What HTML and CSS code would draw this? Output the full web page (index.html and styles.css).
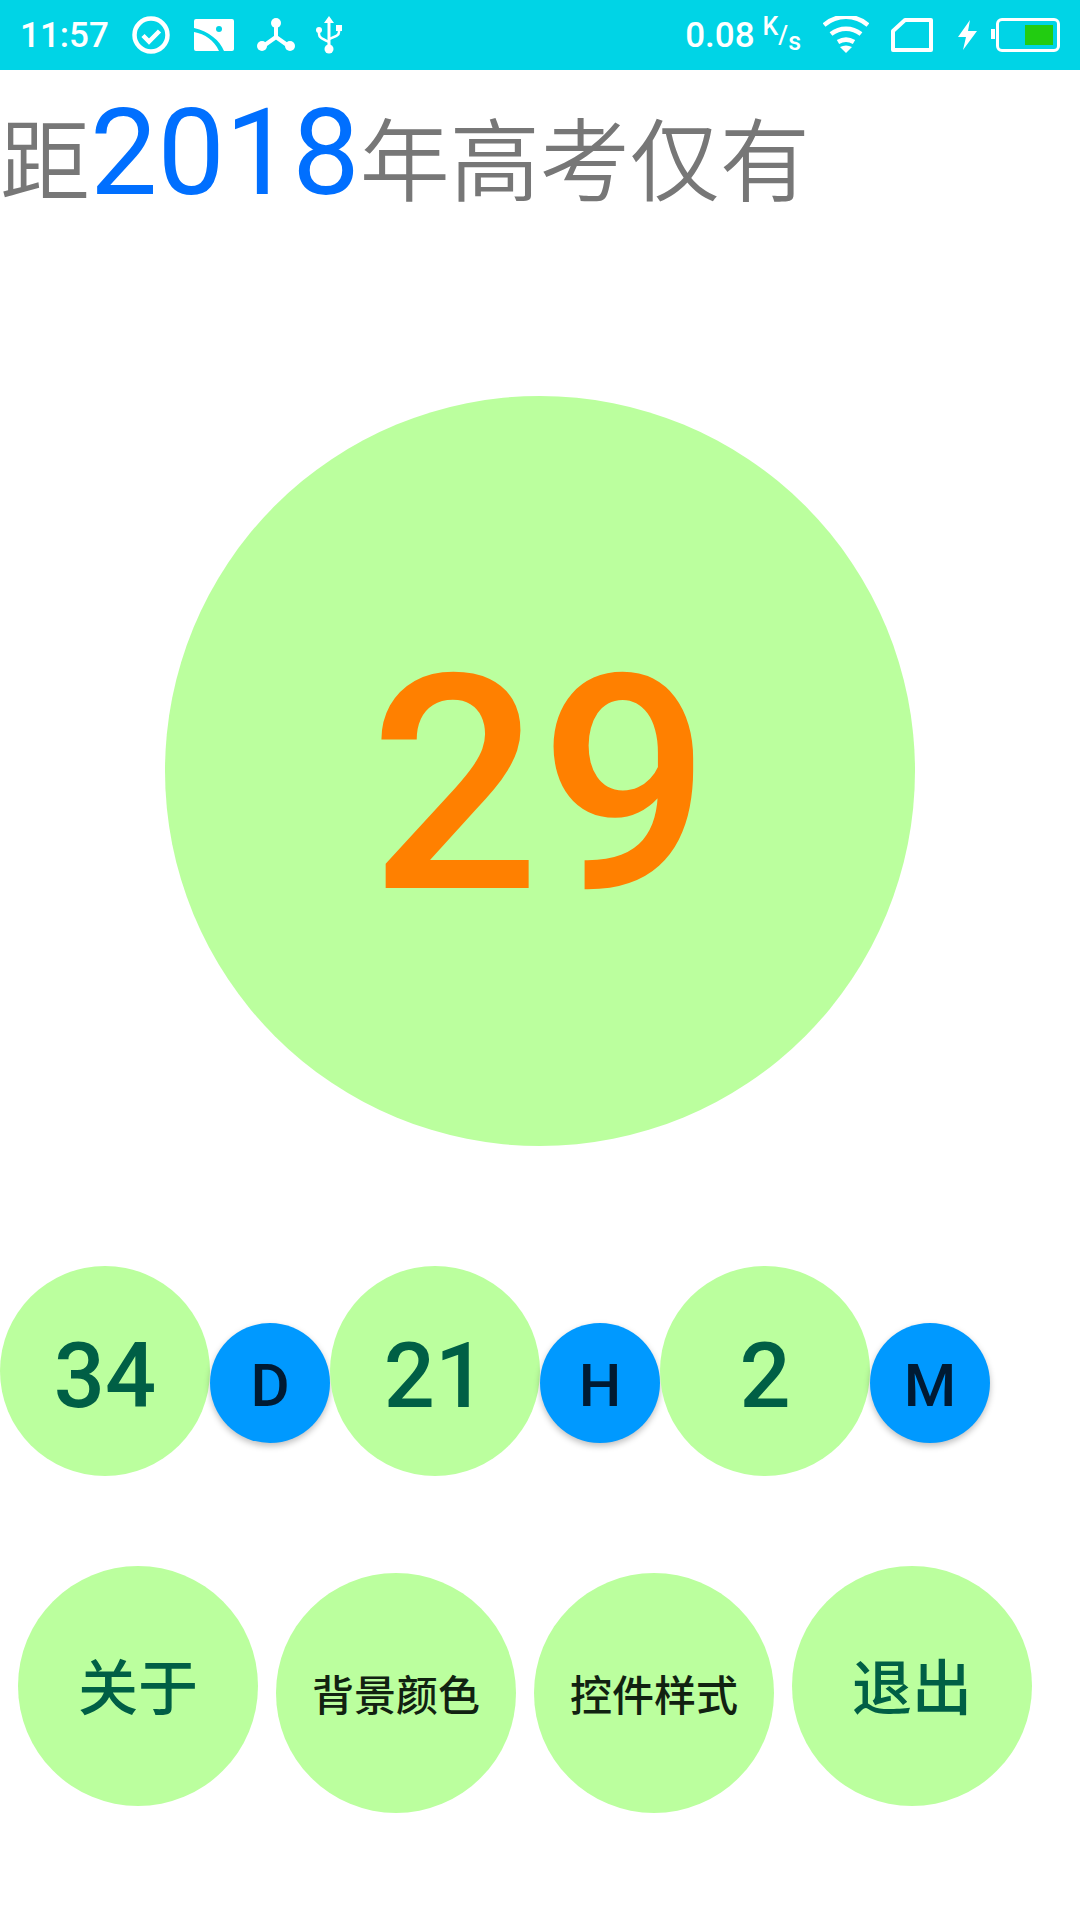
FILE: index.html
```html
<!DOCTYPE html>
<html lang="zh-CN">
<head>
  <meta charset="UTF-8">
  <title>高考倒计时</title>
  <link rel="stylesheet" href="styles.css">
</head>
<body>

<div class="statusBar">
  <div class="statusLeft">
    <span class="time">11:57</span>
    <svg class="icoCheck" width="40" height="40" viewBox="0 0 40 40"><circle cx="20" cy="20" r="16.500" fill="none" stroke="#fff" stroke-width="4.500"/><path d="M12 20.500l6 6 10.500-10.500" fill="none" stroke="#fff" stroke-width="4.500"/></svg>
    <svg class="icoPic" width="40" height="32" viewBox="0 0 40 32"><path d="M2 0h36a2 2 0 0 1 2 2v28a2 2 0 0 1-2 2h-8C26 22 15 12 0 9V2a2 2 0 0 1 2-2zM0 13c11 2 20 8 25 19H2a2 2 0 0 1-2-2z" fill="#fff"/><circle cx="25" cy="10" r="3" fill="#00d4e6"/></svg>
    <svg class="icoHub" width="38" height="36" viewBox="0 0 38 36"><path d="M19 6v14M5 30l14-10 14 10" fill="none" stroke="#fff" stroke-width="4"/><circle cx="19" cy="6" r="5" fill="#fff"/><circle cx="5" cy="29" r="5" fill="#fff"/><circle cx="33" cy="29" r="5" fill="#fff"/></svg>
    <svg class="icoUsb" width="26" height="38" viewBox="0 0 26 38"><path d="M13 0l5 7h-3.500v22h-3V7H8z" fill="#fff"/><circle cx="13" cy="33" r="4.500" fill="#fff"/><path d="M3 13v5c0 3 2 4 10 8M23 12v4c0 3-2 4-10 7" fill="none" stroke="#fff" stroke-width="2.500"/><circle cx="3" cy="14" r="3" fill="#fff"/><rect x="20" y="9" width="6" height="6" fill="#fff"/></svg>
  </div>
  <div class="statusRight">
    <span class="speed">0.08</span>
    <span class="unit"><sup>K</sup>/<sub>s</sub></span>
    <svg class="icoWifi" width="46" height="38" viewBox="0 0 46 38"><path d="M1 9c13-11 31-11 44 0M8 18c9-7 21-7 30 0M15 26c5-3 11-3 16 0" fill="none" stroke="#fff" stroke-width="4.500"/><path d="M17 31c4-2 8-2 12 0l-6 6z" fill="#fff"/></svg>
    <svg class="icoSim" width="42" height="34" viewBox="0 0 42 34"><path d="M14 2h26v30H2V13z" fill="none" stroke="#fff" stroke-width="4" stroke-linejoin="round"/></svg>
    <svg class="icoBolt" width="20" height="30" viewBox="0 0 20 30"><path d="M12 0L0 17h8L5 30 19 11h-9z" fill="#fff"/></svg>
    <div class="battery"><div class="batteryLevel"></div></div>
  </div>
</div>

<h1 class="title"><span>距</span><span class="year">2018</span><span>年高考仅有</span></h1>

<div class="bigCircle"><span>29</span></div>

<div class="timeRow">
  <div class="numCircle">34</div>
  <div class="unitCircle">D</div>
  <div class="numCircle">21</div>
  <div class="unitCircle">H</div>
  <div class="numCircle">2</div>
  <div class="unitCircle">M</div>
</div>

<div class="menuRow">
  <div class="menuBtn">关于</div>
  <div class="menuBtn small">背景颜色</div>
  <div class="menuBtn small">控件样式</div>
  <div class="menuBtn">退出</div>
</div>

</body>
</html>
```
FILE: styles.css
```css
body {
  margin: 0;
  width: 1080px;
  height: 1920px;
  overflow: hidden;
  background: #fff;
  font-family: Roboto, "Noto Sans CJK SC", sans-serif;
}
.statusBar {
  display: flex;
  justify-content: space-between;
  align-items: center;
  height: 70px;
  padding: 0 20px;
  background: #00d4e6;
  color: #fff;
}
.statusLeft, .statusRight {
  display: flex;
  align-items: center;
}
.time {
  font-size: 35px;
  font-weight: 500;
  margin-right: 22px;
}
.icoPic { margin-left: 23px; }
.icoHub { margin-left: 23px; }
.icoUsb { margin-left: 21px; }
.speed {
  font-size: 35px;
  font-weight: 500;
}
.unit {
  font-size: 25px;
  font-weight: 500;
  margin-left: 8px;
  margin-right: 22px;
}
.unit sup, .unit sub {
  font-size: 25px;
  line-height: 0;
}
.icoSim { margin-left: 22px; }
.icoBolt { margin-left: 25px; }
.battery {
  position: relative;
  box-sizing: border-box;
  width: 64px;
  height: 34px;
  margin-left: 18px;
  padding: 4px;
  border: 3px solid #fff;
  border-radius: 6px;
  display: flex;
  justify-content: flex-end;
}
.battery::before {
  content: "";
  position: absolute;
  left: -8px;
  top: 8px;
  width: 4px;
  height: 10px;
  background: #fff;
}
.batteryLevel {
  width: 28px;
  background: #22cc11;
}
.title {
  margin: 18px 0 0;
  height: 122px;
  line-height: 130px;
  font-size: 90px;
  font-weight: 350;
  color: #777;
  white-space: nowrap;
}
.year {
  font-size: 120px;
  font-weight: 400;
  color: #006fff;
}
.bigCircle {
  box-sizing: border-box;
  display: flex;
  align-items: center;
  justify-content: center;
  width: 750px;
  height: 750px;
  margin: 186px auto 0;
  padding-top: 28px;
  border-radius: 50%;
  background: #bbff9e;
  color: #ff8000;
  font-size: 300px;
  font-weight: 500;
}
.timeRow {
  display: flex;
  margin-top: 120px;
}
.numCircle {
  box-sizing: border-box;
  display: flex;
  align-items: center;
  justify-content: center;
  width: 210px;
  height: 210px;
  padding-top: 10px;
  border-radius: 50%;
  background: #bbff9e;
  color: #005f45;
  font-size: 90px;
  font-weight: 500;
}
.unitCircle {
  box-sizing: border-box;
  display: flex;
  align-items: center;
  justify-content: center;
  width: 120px;
  height: 120px;
  margin-top: 57px;
  padding-top: 4px;
  border-radius: 50%;
  background: #0099ff;
  color: #001a33;
  font-size: 60px;
  font-weight: 500;
  box-shadow: 0 3px 6px rgba(0, 0, 0, 0.25);
}
.menuRow {
  display: flex;
  gap: 18px;
  margin-top: 90px;
  padding-left: 18px;
}
.menuBtn {
  box-sizing: border-box;
  display: flex;
  align-items: center;
  justify-content: center;
  width: 240px;
  height: 240px;
  padding-bottom: 6px;
  border-radius: 50%;
  background: #bbff9e;
  color: #005f45;
  font-size: 60px;
  font-weight: 500;
}
.menuBtn.small {
  margin-top: 7px;
  padding-bottom: 2px;
  color: #112211;
  font-size: 42px;
}
```
